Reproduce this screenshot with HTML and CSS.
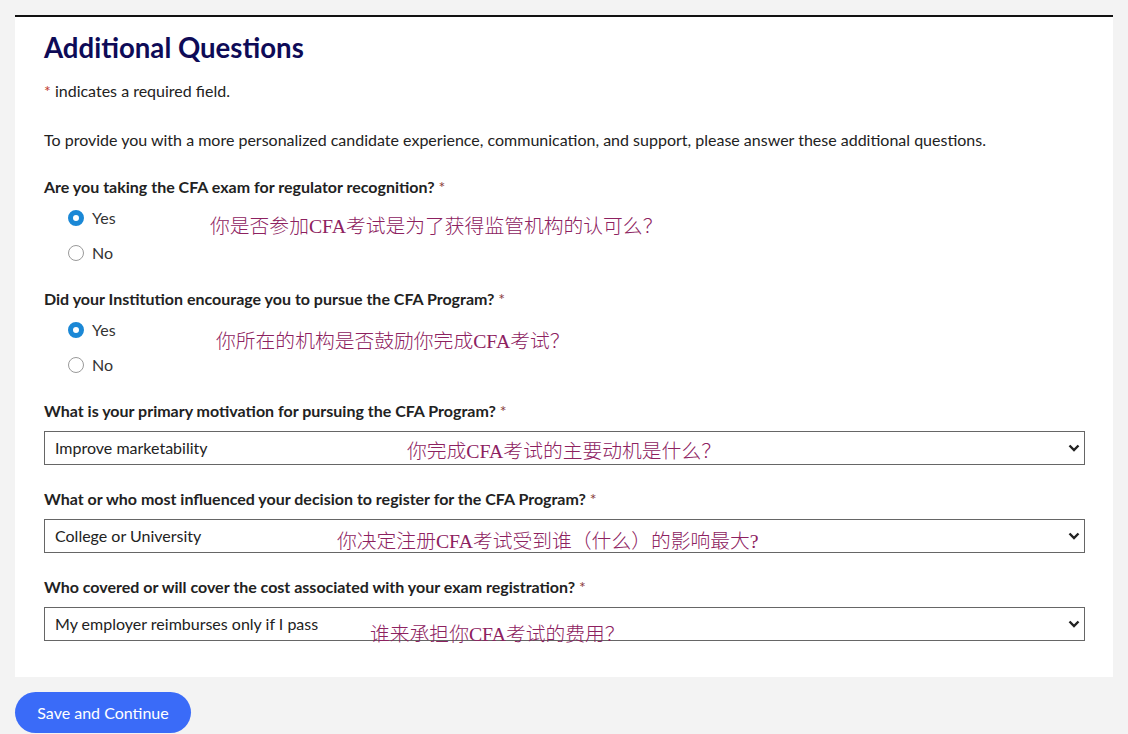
FILE: index.html
```html
<!DOCTYPE html>
<html lang="en">
<head>
  <meta charset="UTF-8" />
  <meta name="viewport" content="width=device-width, initial-scale=1.0" />
  <title>Additional Questions</title>
  <link rel="stylesheet" href="styles.css">
</head>
<body>
  <div class="card">
    <h1>Additional Questions</h1>
    <p class="legend"><span class="req">*</span> indicates a required field.</p>
    <p class="intro">To provide you with a more personalized candidate experience, communication, and support, please answer these additional questions.</p>

    <div class="question">
      <div class="q-label">Are you taking the CFA exam for regulator recognition? <span class="q-req">*</span></div>
      <label class="radio checked"><span class="dot"></span>Yes</label>
      <label class="radio"><span class="dot"></span>No</label>
      <span class="note note-1">你是否参加CFA考试是为了获得监管机构的认可么？</span>
    </div>

    <div class="question">
      <div class="q-label">Did your Institution encourage you to pursue the CFA Program? <span class="q-req">*</span></div>
      <label class="radio checked"><span class="dot"></span>Yes</label>
      <label class="radio"><span class="dot"></span>No</label>
      <span class="note note-2">你所在的机构是否鼓励你完成CFA考试？</span>
    </div>

    <div class="question">
      <div class="q-label">What is your primary motivation for pursuing the CFA Program? <span class="q-req">*</span></div>
      <div class="select">
        <span>Improve marketability</span>
        <svg class="chev" width="12" height="8" viewBox="0 0 12 8"><path d="M1.5 1.5 L6 6 L10.5 1.5" fill="none" stroke="#222" stroke-width="2.4"/></svg>
      </div>
      <span class="note note-3">你完成CFA考试的主要动机是什么？</span>
    </div>

    <div class="question">
      <div class="q-label">What or who most influenced your decision to register for the CFA Program? <span class="q-req">*</span></div>
      <div class="select">
        <span>College or University</span>
        <svg class="chev" width="12" height="8" viewBox="0 0 12 8"><path d="M1.5 1.5 L6 6 L10.5 1.5" fill="none" stroke="#222" stroke-width="2.4"/></svg>
      </div>
      <span class="note note-4">你决定注册CFA考试受到谁（什么）的影响最大?</span>
    </div>

    <div class="question">
      <div class="q-label">Who covered or will cover the cost associated with your exam registration? <span class="q-req">*</span></div>
      <div class="select">
        <span>My employer reimburses only if I pass</span>
        <svg class="chev" width="12" height="8" viewBox="0 0 12 8"><path d="M1.5 1.5 L6 6 L10.5 1.5" fill="none" stroke="#222" stroke-width="2.4"/></svg>
      </div>
      <span class="note note-5">谁来承担你CFA考试的费用？</span>
    </div>
  </div>

  <button class="save">Save and Continue</button>
</body>
</html>
```

FILE: styles.css
```css
body {
  margin: 0;
  padding: 15px;
  background-color: #f3f3f3;
  font-family: Lato, "Open Sans", sans-serif;
  font-size: 16px;
  line-height: 20px;
  color: #222;
}
.card {
  background: #fff;
  border-top: 2px solid #111;
  padding: 14px 28px 36px 29px;
}
h1 {
  margin: 0;
  font-size: 27.6px;
  line-height: 34px;
  font-weight: 700;
  color: #0e0b57;
}
.legend {
  margin: 16px 0 0;
}
.req {
  color: #c0392b;
}
.intro {
  margin: 29px 0 0;
}
.question {
  position: relative;
  margin-top: 27px;
}
.question + .question {
  margin-top: 24px;
}
.q-label {
  font-weight: 700;
  color: #222;
}
.q-req {
  font-weight: 400;
  color: #8a3b3b;
}
.radio {
  display: flex;
  align-items: center;
  height: 24px;
  margin: 9px 0 0 24px;
  color: #333;
}
.radio + .radio {
  margin-top: 11px;
}
.dot {
  box-sizing: border-box;
  width: 16px;
  height: 16px;
  border-radius: 50%;
  border: 1px solid #9a9a9a;
  margin-right: 8px;
  background: #fff;
}
.radio.checked .dot {
  border: 5px solid #1b88d6;
}
.select {
  position: relative;
  display: flex;
  align-items: center;
  height: 34px;
  box-sizing: border-box;
  margin-top: 10px;
  padding: 0 10px;
  border: 1px solid #666;
  color: #222;
}
.chev {
  position: absolute;
  right: 4px;
  top: 12px;
}
.note {
  position: absolute;
  white-space: nowrap;
  font-family: "Liberation Serif", "Noto Sans CJK SC", serif;
  font-size: 19.8px;
  font-weight: 300;
  line-height: 20px;
  color: #8d2160;
}
.note-1 { left: 166px; top: 39px; }
.note-2 { left: 172px; top: 42px; }
.note-3 { left: 363px; top: 40px; }
.note-4 { left: 293px; top: 42px; }
.note-5 { left: 326px; top: 47px; }
.save {
  margin-top: 15px;
  width: 176px;
  height: 41px;
  border: none;
  border-radius: 21px;
  background: #3a6bf8;
  color: #fff;
  font-family: Lato, sans-serif;
  font-size: 16px;
  cursor: pointer;
}
```
